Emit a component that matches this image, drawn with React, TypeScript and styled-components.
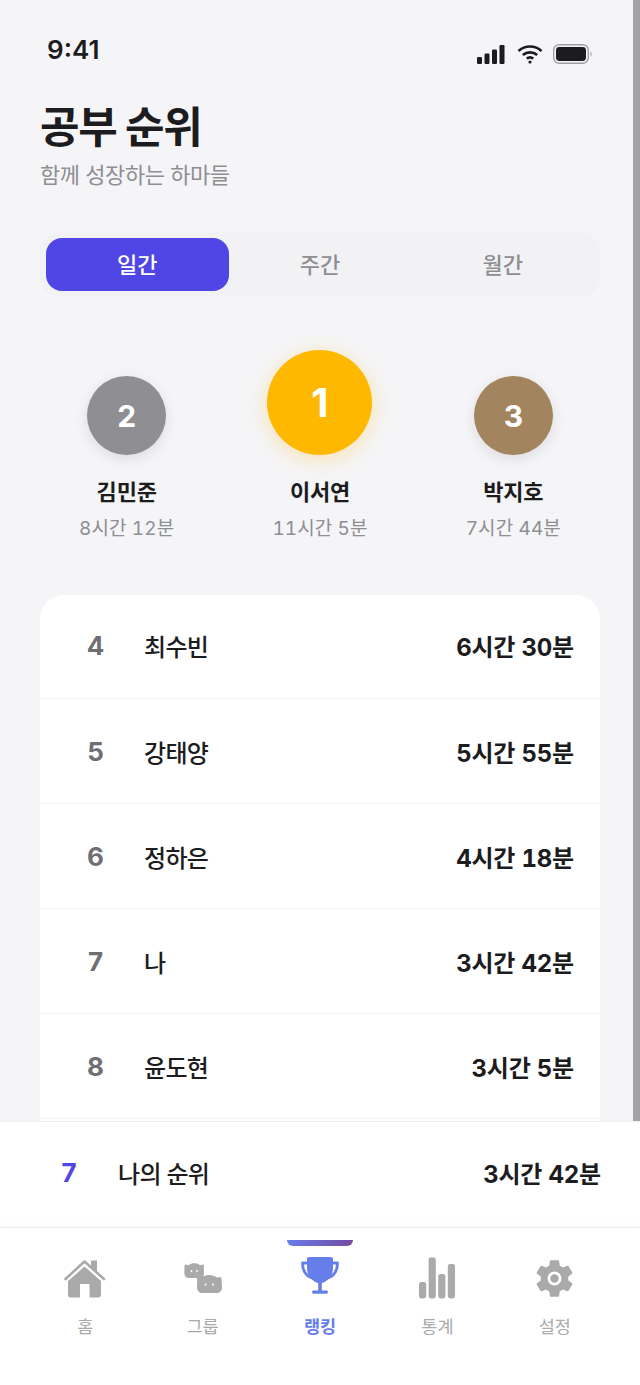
import React from 'react'
import styled, { createGlobalStyle } from 'styled-components'

const GlobalStyle = createGlobalStyle`
html, body {
  margin: 0;
  padding: 0;
  background: #ffffff;
}
* {
  box-sizing: border-box;
}
`
const Page = styled.div`
width: 640px;
height: 1385px;
overflow: hidden;
position: relative;
display: flex;
flex-direction: column;
background: #ffffff;
font-family: Inter, "Noto Sans CJK KR", sans-serif;
color: #1c1c1e;
`
const ScrollArea = styled.div`
height: 1121px;
flex: none;
overflow: hidden;
position: relative;
background: #f5f5f7;
padding: 0 40px;
`
const ScrollThumb = styled.div`
position: absolute;
top: 0;
right: 0;
bottom: 0;
width: 7px;
background: #a3a3a5;
`
const StatusBar = styled.div`
height: 40px;
margin-top: 30px;
padding: 0 7px;
display: flex;
align-items: flex-start;
justify-content: space-between;
`
const Clock = styled.div`
font-size: 26px;
line-height: 40px;
font-weight: 600;
`
const StatusIcons = styled.div`
display: flex;
align-items: center;
gap: 10px;
margin-top: 14px;
`
const Title = styled.h1`
margin: 27px 0 0;
font-size: 43px;
line-height: 60px;
font-weight: 700;
letter-spacing: -1.4px;
`
const Subtitle = styled.p`
margin: 3px 0 0;
font-size: 22px;
line-height: 30px;
color: #8e8e93;
letter-spacing: -0.45px;
`
const Tabs = styled.div`
margin-top: 42px;
height: 65px;
padding: 6px;
display: flex;
border-radius: 20px;
background: #f2f2f4;
`
const Tab = styled.div<{ $active?: boolean }>`
flex: 1;
display: flex;
align-items: center;
justify-content: center;
height: 53px;
padding-bottom: 3px;
border-radius: 16px;
font-size: 22px;
font-weight: 500;
color: ${p => (p.$active ? '#ffffff' : '#8e8e93')};
background: ${p => (p.$active ? '#4f46e5' : 'transparent')};
`
const Podium = styled.div`
margin-top: 53px;
display: grid;
grid-template-columns: repeat(3, 1fr);
margin-left: -10px;
margin-right: -10px;
align-items: end;
`
const PodiumItem = styled.div`
display: flex;
flex-direction: column;
align-items: center;
`
const Medal = styled.div<{ $color: string; $size: number; $glow?: boolean }>`
width: ${p => p.$size}px;
height: ${p => p.$size}px;
border-radius: 50%;
display: flex;
align-items: center;
justify-content: center;
color: #ffffff;
font-weight: 700;
font-size: ${p => (p.$glow ? 40 : 30)}px;
background: ${p => p.$color};
box-shadow: ${p => (p.$glow ? '0 4px 20px rgba(255, 184, 0, 0.3)' : '0 4px 14px rgba(0, 0, 0, 0.1)')};
`
const PodiumName = styled.div`
margin-top: 21px;
font-size: 22px;
line-height: 32px;
font-weight: 600;
letter-spacing: -0.2px;
`
const PodiumTime = styled.div`
margin-top: 7px;
font-size: 19px;
line-height: 28px;
letter-spacing: 0.1px;
font-variant-numeric: tabular-nums;
color: #8e8e93;
`
const RankCard = styled.div`
margin-top: 52px;
background: #ffffff;
border-radius: 24px 24px 0 0;
`
const RankRow = styled.div`
height: 105px;
display: flex;
align-items: center;
padding: 0 26px 0 0;
border-bottom: 1.5px solid #f2f2f4;
&:first-child {
  height: 104px;
  padding-bottom: 3px;
}
`
const RankNum = styled.div`
width: 104px;
padding-left: 7px;
text-align: center;
font-size: 26px;
font-weight: 700;
color: #6e6e73;
`
const RankName = styled.div`
flex: 1;
font-size: 24px;
font-weight: 500;
letter-spacing: -0.7px;
`
const RankTime = styled.div`
font-size: 24px;
font-weight: 700;
letter-spacing: -0.2px;
font-variant-numeric: tabular-nums;
`
const MyRank = styled.div`
height: 106px;
flex: none;
display: flex;
align-items: center;
padding: 0 39px 4px 0;
background: #ffffff;
border-top: 1px solid #f0f0f2;
`
const MyNum = styled.div`
width: 118px;
padding-left: 20px;
text-align: center;
font-size: 26px;
font-weight: 700;
color: #4f46e5;
`
const TabBar = styled.div`
flex: 1;
position: relative;
display: grid;
grid-template-columns: repeat(5, 1fr);
padding: 0 26.5px;
background: #ffffff;
border-top: 1.5px solid #ececee;
box-shadow: 0 -2px 6px rgba(0, 0, 0, 0.02);
`
const ActiveBar = styled.div`
position: absolute;
top: 12px;
left: 287px;
width: 66px;
height: 6px;
border-radius: 0 0 6px 6px;
background: linear-gradient(90deg, #667eea, #764ba2);
`
const NavItem = styled.div<{ $active?: boolean }>`
display: flex;
flex-direction: column;
align-items: center;
padding-top: 25px;
color: ${p => (p.$active ? '#667eea' : '#aaaaaa')};
`
const NavIcon = styled.div`
height: 50px;
width: 50px;
display: flex;
align-items: center;
justify-content: center;
`
const NavLabel = styled.div<{ $active?: boolean }>`
margin-top: 11px;
font-size: 17.5px;
line-height: 26px;
font-weight: ${p => (p.$active ? 700 : 400)};
`

const rows = [
    { rank: 4, name: '최수빈', time: '6시간 30분' },
    { rank: 5, name: '강태양', time: '5시간 55분' },
    { rank: 6, name: '정하은', time: '4시간 18분' },
    { rank: 7, name: '나', time: '3시간 42분' },
    { rank: 8, name: '윤도현', time: '3시간 5분' },
]

const podium = [
    { rank: 2, name: '김민준', time: '8시간 12분', color: '#8e8e93', size: 79 },
    { rank: 1, name: '이서연', time: '11시간 5분', color: '#ffb800', size: 105, glow: true },
    { rank: 3, name: '박지호', time: '7시간 44분', color: '#a2845e', size: 79 },
]

function Signal() {
    return (
        <svg width="30" height="19" viewBox="0 0 30 19" fill="#1c1c1e">
            <rect x="0" y="12" width="5" height="7" rx="1.2" />
            <rect x="7.5" y="8.5" width="5" height="10.5" rx="1.2" />
            <rect x="15" y="4.5" width="5" height="14.5" rx="1.2" />
            <rect x="22.5" y="0" width="5" height="19" rx="1.2" />
        </svg>
    )
}

function Wifi() {
    return (
        <svg width="26" height="20" viewBox="0 0 26 20" fill="none" stroke="#1c1c1e" strokeWidth="2.7">
            <path d="M1.5 7 C8 1 18 1 24.5 7" />
            <path d="M5.8 11 C10 7.4 16 7.4 20.2 11" />
            <path d="M9.8 14.6 C11.8 13 14.2 13 16.2 14.6" />
            <circle cx="13" cy="18" r="1.6" fill="#1c1c1e" stroke="none" />
        </svg>
    )
}

function Battery() {
    return (
        <svg width="40" height="20" viewBox="0 0 40 20" fill="none">
            <rect x="0.7" y="0.7" width="34.6" height="18.6" rx="5.5" stroke="#a0a0a2" strokeWidth="1.4" />
            <rect x="3" y="3" width="30" height="14" rx="3.4" fill="#1c1c1e" />
            <path d="M37.5 7.5 C39 8 39 12 37.5 12.5 Z" fill="#a0a0a2" />
        </svg>
    )
}

function HomeIcon() {
    return (
        <svg width="42" height="40" viewBox="0 0 42 40" fill="currentColor">
            <path d="M27 2.5 H33 V16 L27 10.5 Z" />
            <path d="M1.5 21 L20.5 3.5 L40 21" fill="none" stroke="currentColor" strokeWidth="2.6" strokeLinecap="round" strokeLinejoin="round" />
            <path d="M20.5 8.5 L37 23 V37 C37 38.5 36 39.5 34.5 39.5 H25.5 V26 H16 V39.5 H6.5 C5 39.5 4 38.5 4 37 V23 Z" />
        </svg>
    )
}

function GroupIcon() {
    return (
        <svg width="38" height="30" viewBox="0 0 38 30" fill="currentColor">
            <path d="M1.5 1.5 L4.5 2.2 C8 -0.4 12.5 -0.4 16 2.2 L19 1.5 C20 2 20 3.5 19.8 5 L20 10 C20 13 18.5 15 15.5 15 H5 C2 15 0.3 13 0.3 10 L0.5 5 C0.3 3.5 0.5 2 1.5 1.5 Z" />
            <circle cx="7.5" cy="8" r="0.9" fill="#ffffff" />
            <circle cx="13" cy="8" r="0.9" fill="#ffffff" />
            <path d="M13.5 14 L17 14.6 C21 11.2 29 11.2 33 14.6 L36.5 14 C37.5 14.6 37.8 16 37.6 17.5 L38 24 C38 28 35.5 30 32.5 30 H18.5 C15.5 30 13 28 13 24 L13.2 17.5 C13 16 12.8 14.6 13.5 14 Z" />
            <circle cx="21.5" cy="21.5" r="1" fill="#ffffff" />
            <circle cx="29" cy="21.5" r="1" fill="#ffffff" />
        </svg>
    )
}

function TrophyIcon() {
    return (
        <svg width="40" height="42" viewBox="0 0 40 42" fill="currentColor">
            <path d="M7 2 C7 0.8 8 0 9.5 0 H30.5 C32 0 33 0.8 33 2 V11 C33 19 27 25 21.8 26 V34 H18.2 V26 C13 25 7 19 7 11 Z" />
            <path d="M8 6 H2.5 C2.5 13 5 18.5 12 21 M32 6 H37.5 C37.5 13 35 18.5 28 21" fill="none" stroke="currentColor" strokeWidth="2.8" strokeLinejoin="round" />
            <rect x="12" y="33.5" width="16" height="3.2" rx="1.6" />
        </svg>
    )
}

function StatsIcon() {
    return (
        <svg width="36" height="42" viewBox="0 0 36 42" fill="currentColor">
            <rect x="0" y="25" width="7.2" height="16.5" rx="2.4" />
            <rect x="9.6" y="0.5" width="7.2" height="41" rx="2.4" />
            <rect x="19.2" y="17" width="7.2" height="24.5" rx="2.4" />
            <rect x="28.8" y="7" width="7.2" height="34.5" rx="2.4" />
        </svg>
    )
}

function GearIcon() {
    return (
        <svg width="37" height="39" viewBox="2.4 1.8 19.2 20.4" fill="currentColor">
            <path d="M19.14 12.94c.04-.3.06-.61.06-.94 0-.32-.02-.64-.07-.94l2.03-1.58c.18-.14.23-.41.12-.61l-1.92-3.32c-.12-.22-.37-.29-.59-.22l-2.39.96c-.5-.38-1.03-.7-1.62-.94l-.36-2.54c-.04-.24-.24-.41-.48-.41h-3.84c-.24 0-.43.17-.47.41l-.36 2.54c-.59.24-1.13.57-1.62.94l-2.39-.96c-.22-.08-.47 0-.59.22L2.74 8.87c-.12.21-.08.47.12.61l2.03 1.58c-.05.3-.09.63-.09.94s.02.64.07.94l-2.03 1.58c-.18.14-.23.41-.12.61l1.92 3.32c.12.22.37.29.59.22l2.39-.96c.5.38 1.03.7 1.62.94l.36 2.54c.05.24.24.41.48.41h3.84c.24 0 .44-.17.47-.41l.36-2.54c.59-.24 1.13-.56 1.62-.94l2.39.96c.22.08.47 0 .59-.22l1.92-3.32c.12-.22.07-.47-.12-.61l-2.01-1.58zM12 15.6c-1.98 0-3.6-1.62-3.6-3.6s1.62-3.6 3.6-3.6 3.6 1.62 3.6 3.6-1.62 3.6-3.6 3.6z" />
            <circle cx="12" cy="12" r="2.2" />
        </svg>
    )
}

const navItems = [
    { label: '홈', icon: <HomeIcon /> },
    { label: '그룹', icon: <GroupIcon /> },
    { label: '랭킹', icon: <TrophyIcon />, active: true },
    { label: '통계', icon: <StatsIcon /> },
    { label: '설정', icon: <GearIcon /> },
]

export default function App() {
    return (
        <Page>
            <GlobalStyle />
            <ScrollArea>
                <StatusBar>
                    <Clock>9:41</Clock>
                    <StatusIcons>
                        <Signal />
                        <Wifi />
                        <Battery />
                    </StatusIcons>
                </StatusBar>
                <Title>공부 순위</Title>
                <Subtitle>함께 성장하는 하마들</Subtitle>
                <Tabs>
                    <Tab $active>일간</Tab>
                    <Tab>주간</Tab>
                    <Tab>월간</Tab>
                </Tabs>
                <Podium>
                    {podium.map(item => (
                        <PodiumItem key={item.rank}>
                            <Medal $color={item.color} $size={item.size} $glow={item.glow}>{item.rank}</Medal>
                            <PodiumName>{item.name}</PodiumName>
                            <PodiumTime>{item.time}</PodiumTime>
                        </PodiumItem>
                    ))}
                </Podium>
                <RankCard>
                    {rows.map(row => (
                        <RankRow key={row.rank}>
                            <RankNum>{row.rank}</RankNum>
                            <RankName>{row.name}</RankName>
                            <RankTime>{row.time}</RankTime>
                        </RankRow>
                    ))}
                    <RankRow />
                </RankCard>
                <ScrollThumb />
            </ScrollArea>
            <MyRank>
                <MyNum>7</MyNum>
                <RankName>나의 순위</RankName>
                <RankTime>3시간 42분</RankTime>
            </MyRank>
            <TabBar>
                <ActiveBar />
                {navItems.map(item => (
                    <NavItem key={item.label} $active={item.active}>
                        <NavIcon>{item.icon}</NavIcon>
                        <NavLabel $active={item.active}>{item.label}</NavLabel>
                    </NavItem>
                ))}
            </TabBar>
        </Page>
    )
}
